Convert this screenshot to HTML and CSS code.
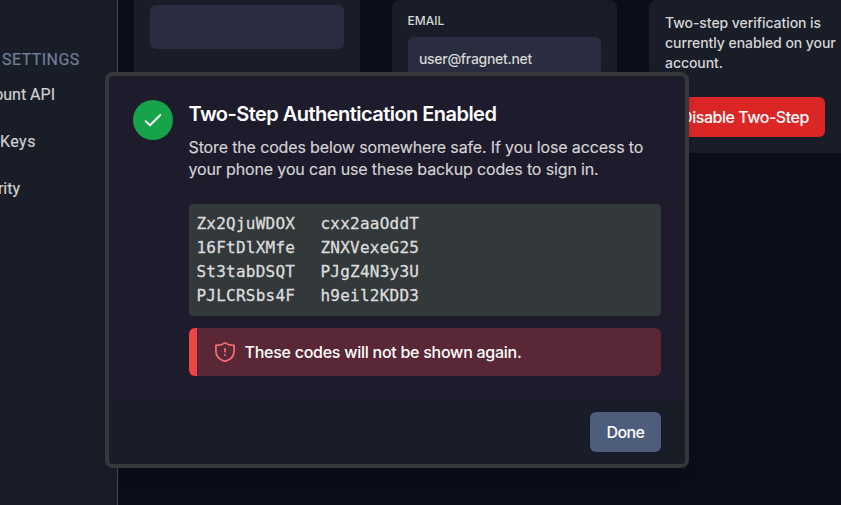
FILE: index.html
```html
<!DOCTYPE html>
<html lang="en">
<head>
<meta charset="utf-8">
<title>Two-Step Authentication</title>
<link rel="stylesheet" href="styles.css">
</head>
<body>
<div class="page">
  <aside class="sidebar">
    <div class="nav-title"><span>SETTINGS</span></div>
    <a class="nav-item"><span class="t-api">ount API</span></a>
    <a class="nav-item"><span class="t-keys">Keys</span></a>
    <a class="nav-item"><span class="t-sec">rity</span></a>
  </aside>
  <main class="cards">
    <section class="card card-password"><div class="field"></div></section>
    <section class="card card-email">
      <div class="label"><span>EMAIL</span></div>
      <div class="field"><span>user@fragnet.net</span></div>
    </section>
    <section class="card card-twostep">
      <p><span>Two-step verification is</span><br><span>currently enabled on your</span><br><span>account.</span></p>
      <button class="btn-danger"><span>Disable Two-Step</span></button>
    </section>
  </main>
</div>
<div class="overlay">
  <div class="modal">
    <div class="modal-body">
      <div class="badge">
        <svg width="20" height="20" viewBox="0 0 20 20" fill="none" stroke="#fff" stroke-width="1.9" stroke-linecap="round" stroke-linejoin="round"><path d="M2.7 11.2 7 15.2 17.3 5"/></svg>
      </div>
      <div class="content">
        <h3><span>Two-Step Authentication Enabled</span></h3>
        <p><span>Store the codes below somewhere safe. If you lose access to</span><br><span>your phone you can use these backup codes to sign in.</span></p>
        <div class="codes">
          <code>Zx2QjuWDOX</code><code>cxx2aaOddT</code>
          <code>16FtDlXMfe</code><code>ZNXVexeG25</code>
          <code>St3tabDSQT</code><code>PJgZ4N3y3U</code>
          <code>PJLCRSbs4F</code><code>h9eil2KDD3</code>
        </div>
        <div class="alert">
          <svg width="20" height="20" viewBox="0 0 20 20" fill="none" stroke="#f87171" stroke-width="1.7" stroke-linejoin="round"><path d="M10 .9C7.500 2.600 4 3.400 .9 3.300V9c0 5 3.700 8.800 9.100 10.400 5.400-1.600 9.100-5.400 9.100-10.400V3.300C16 3.400 12.500 2.600 10 .9Z"/><path d="M10 6.200v4.200M10 12.300v1.700"/></svg>
          <span>These codes will not be shown again.</span>
        </div>
      </div>
    </div>
    <div class="modal-footer"><button class="btn-done"><span>Done</span></button></div>
  </div>
</div>
</body>
</html>
```
FILE: styles.css
```css
* { box-sizing: border-box; }
html, body { height: 100%; margin: 0; overflow: hidden; }
body { background: #0b0d18; color: #d6d6d6; font: 16px/24px Inter, "Liberation Sans", sans-serif; }
p, h3 { margin: 0; }
button { border: 0; padding: 0; font: inherit; font-weight: 500; color: #fff; }
span { white-space: nowrap; }
.page { display: flex; height: 505px; }
.sidebar { width: 118px; flex: none; padding-top: 48px; background: #191d28; border-right: 1px solid #474859; font-family: Roboto, sans-serif; -webkit-text-stroke: .2px; }
.nav-title { padding-left: 2px; color: #718096; margin-bottom: 11px; letter-spacing: .45px; }
.nav-item { display: flex; height: 47px; color: #cfcfcf; }
.nav-item span { flex: none; }
.t-keys { letter-spacing: .45px; }
.nav-item:nth-child(2) { width: 55px; justify-content: flex-end; }
.nav-item:nth-child(4) { width: 20px; justify-content: flex-end; }
.cards { flex: none; display: flex; gap: 32px; padding-left: 16px; align-items: flex-start; }
.card { background: #191d28; border-radius: 8px; height: 153px; padding: 0 16px; }
.card-password { width: 226px; padding-top: 5px; border-radius: 0; }
.card-email { width: 225px; padding-top: 11px; }
.card-twostep { width: 208px; padding-top: 13px; border-radius: 8px 0 0 0; }
.field { height: 44px; border-radius: 6px; background: #292d3f; padding: 0 11px; font-size: 14px; font-weight: 500; letter-spacing: -.3px; line-height: 44px; }
.label { font-size: 12px; font-weight: 500; line-height: 20px; margin: 0 0 6px -.5px; }
.card-twostep p { font-size: 14px; font-weight: 500; letter-spacing: -.06px; line-height: 20px; }
.btn-danger { width: 160px; height: 40px; margin-top: 24px; border-radius: 6px; background: #dc2626; letter-spacing: -.47px; }
.overlay { position: absolute; inset: 0; padding: 72px 152px 0 105px; }
.modal { width: 584px; height: 396px; border: 4px solid #34383b; border-radius: 8px; background: #1e1b2d; overflow: hidden; display: flex; flex-direction: column; box-shadow: 0 10px 15px -3px rgba(0,0,0,.15); }
.modal-body { height: 324px; padding: 24px; display: flex; gap: 16px; }
.badge { width: 40px; height: 40px; border-radius: 50%; flex: none; background: #16a34a; display: flex; align-items: center; justify-content: center; }
.content { width: 472px; }
h3 { margin-left: -.5px; font-size: 20px; line-height: 28px; font-weight: 600; letter-spacing: -.54px; color: #fff; }
.content p { margin: 8px 0 0 -.5px; line-height: 22px; letter-spacing: -.14px; color: #d4d4d4; -webkit-text-stroke: .15px; }
.codes { margin-top: 24px; height: 112px; padding: 8px; border-radius: 4px; background: #33383b; display: grid; grid-template-columns: 124px 1fr; grid-auto-rows: 24px; }
code { margin-left: -.5px; font: 16px/24px "DejaVu Sans Mono", monospace; letter-spacing: .23px; color: #dcdcdc; -webkit-text-stroke: .3px; }
.alert { margin-top: 12px; height: 48px; border-left: 8px solid #ef4444; border-radius: 6px; background: #592735; color: #fff; font-weight: 500; letter-spacing: -.26px; display: flex; align-items: center; gap: 9.500px; padding-left: 18px; }
.modal-footer { height: 64px; background: #191d28; display: flex; align-items: center; justify-content: flex-end; padding-right: 24px; }
.btn-done { width: 71px; height: 40px; border-radius: 6px; background: #4f5d7d; letter-spacing: -.6px; }
```
